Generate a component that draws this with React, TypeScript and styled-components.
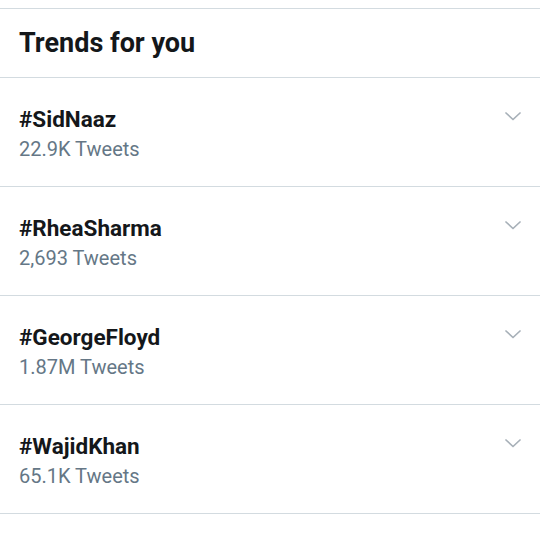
import React from "react";
import styled, { createGlobalStyle } from "styled-components";

const GlobalStyle = createGlobalStyle`
  body {
    margin: 0;
    background: #fff;
    font-family: Roboto, "Liberation Sans", sans-serif;
  }
`;

const trends = [
  { tag: "#SidNaaz", count: "22.9K Tweets" },
  { tag: "#RheaSharma", count: "2,693 Tweets" },
  { tag: "#GeorgeFloyd", count: "1.87M Tweets" },
  { tag: "#WajidKhan", count: "65.1K Tweets" },
];

const Chevron = () => (
  <svg width="16" height="9" viewBox="0 0 16 9" fill="none">
    <path d="M1 1 L8 7.5 L15 1" stroke="#a7b0b8" strokeWidth="1.7" strokeLinecap="round" strokeLinejoin="round" />
  </svg>
);

const App: React.FC = () => {
  return (
    <Page>
      <GlobalStyle />
      <Panel>
        <Header>Trends for you</Header>
        {trends.map(t => (
          <TrendRow key={t.tag}>
            <TrendText>
              <TrendTag>{t.tag}</TrendTag>
              <TrendCount>{t.count}</TrendCount>
            </TrendText>
            <MoreButton>
              <Chevron />
            </MoreButton>
          </TrendRow>
        ))}
      </Panel>
    </Page>
  );
};

export default App;

const Page = styled.div`
  width: 540px;
  height: 540px;
  padding-top: 8px;
  box-sizing: border-box;
  background: #fff;
`;

const Panel = styled.div`
  border-top: 1px solid #d3dbe0;
`;

const Header = styled.div`
  height: 68px;
  padding: 0 19px;
  display: flex;
  align-items: center;
  font-size: 27px;
  font-weight: 700;
  color: #14171a;
  border-bottom: 1px solid #d3dbe0;
`;

const TrendRow = styled.div`
  height: 108px;
  padding: 0 19px 0 19px;
  display: flex;
  justify-content: space-between;
  align-items: flex-start;
  border-bottom: 1px solid #d3dbe0;
`;

const TrendText = styled.div`
  display: flex;
  flex-direction: column;
  padding-top: 27px;
`;

const TrendTag = styled.div`
  font-size: 22.5px;
  font-weight: 700;
  color: #14171a;
  line-height: 28px;
`;

const TrendCount = styled.div`
  font-size: 20px;
  color: #657786;
  line-height: 32px;
`;

const MoreButton = styled.div`
  padding-top: 34px;
  line-height: 0;
`;
